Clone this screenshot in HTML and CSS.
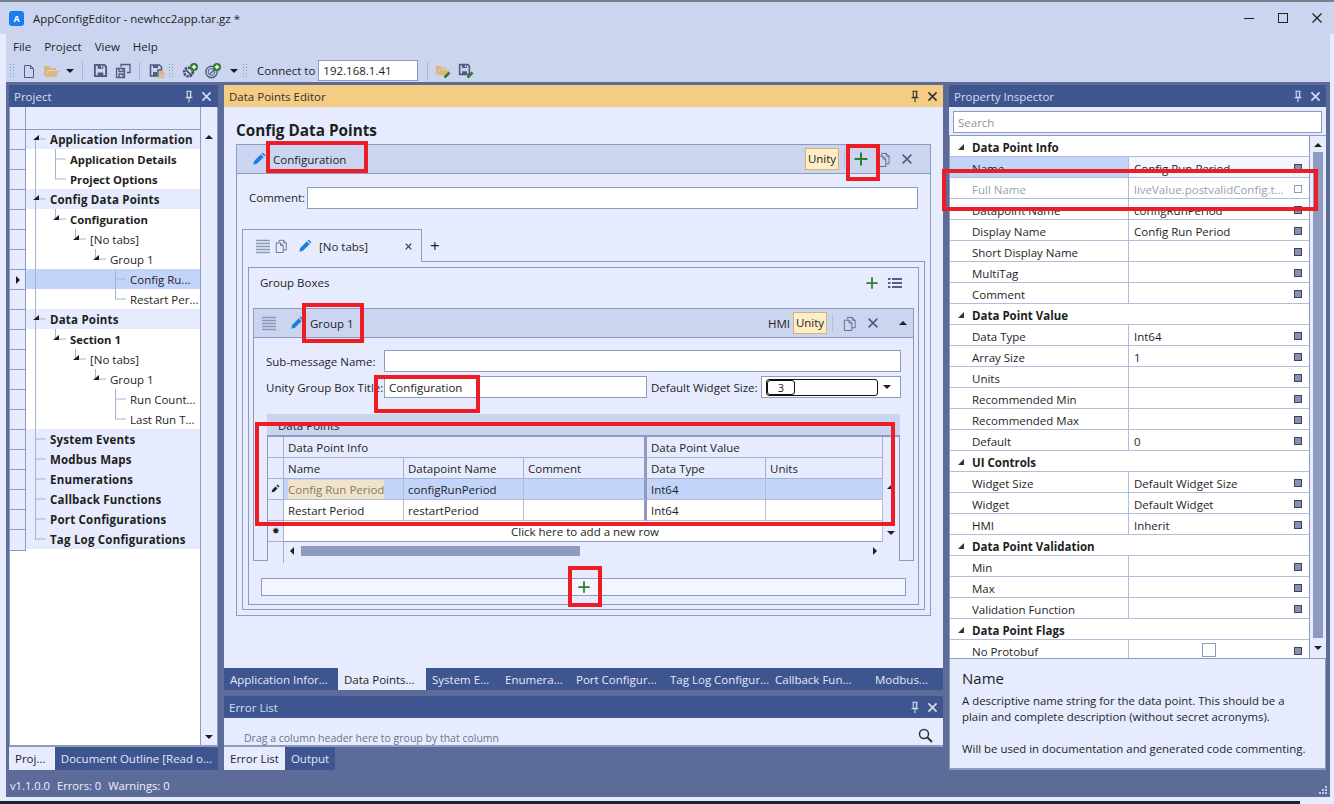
FILE: index.html
```html
<!DOCTYPE html>
<html lang="en">
<head>
  <meta charset="UTF-8">
  <title>AppConfigEditor - newhcc2app.tar.gz *</title>
  <link rel="stylesheet" href="styles.css">
</head>
<body>
  <!-- shared icons -->
  <svg class="icon-defs" width="0" height="0">
    <symbol id="i-pencil" viewBox="0 0 16 16"><path d="M1.5 14.5l1-4.2 7.6-7.6 3.2 3.2-7.6 7.6zM11 1.8l1.2-1.1 3.1 3.1-1.1 1.2z" fill="#1b7fe3"/></symbol>
    <symbol id="i-copy" viewBox="0 0 16 16"><path d="M6 3.5V1.5h5l3 3v8h-3M2.5 4.5h5l3 3v8h-8zM7.5 4.5v3h3M11 1.5v3h3" fill="none" stroke="#5b6788" stroke-width="1"/></symbol>
    <symbol id="i-close" viewBox="0 0 16 16"><path d="M3 3l10 10M13 3L3 13" fill="none" stroke="currentColor" stroke-width="2"/></symbol>
    <symbol id="i-plus" viewBox="0 0 16 16"><path d="M8 1.5v13M1.5 8h13" fill="none" stroke="#2c7d2f" stroke-width="2"/></symbol>
    <symbol id="i-pin" viewBox="0 0 16 16"><path d="M5 2.5h6M6 2.5v7h4v-7M4 10h8M8 10v5" fill="none" stroke="currentColor" stroke-width="1.2"/><path d="M9 3h1v6H9z" fill="currentColor"/></symbol>
    <symbol id="i-lines" viewBox="0 0 16 16"><path d="M1 2.5h14M1 5.5h14M1 8.500h14M1 11.500h14M1 14.500h14" fill="none" stroke="#8d98b8" stroke-width="1.4"/></symbol>
    <symbol id="i-save" viewBox="0 0 16 16"><path d="M2 2h10l2 2v10H2z" fill="none" stroke="#505b7e" stroke-width="2"/><path d="M5 2h6v4H5zM5 10h6v4H5z" fill="#505b7e"/><path d="M8.500 2.500h1.500v2.500H8.500z" fill="#ccd5f0"/></symbol>
    <symbol id="i-folder" viewBox="0 0 16 16"><path d="M1 3h5l1.500 2H13v2H5L2.500 13H1z" fill="#dcb67a"/><path d="M5.500 8H16l-3 6H2.500z" fill="#dcb67a"/></symbol>
  </svg>

  <div class="top-strip"></div>
  <header class="titlebar">
    <span class="app-logo">A</span>
    <span class="app-title">AppConfigEditor - newhcc2app.tar.gz *</span>
    <span class="win-controls">
      <svg width="12" height="12" viewBox="0 0 12 12"><path d="M1 6.500h10" stroke="#222" fill="none"/></svg>
      <svg width="12" height="12" viewBox="0 0 12 12"><rect x="1.500" y="1.500" width="9" height="9" stroke="#222" fill="none"/></svg>
      <svg width="12" height="12" viewBox="0 0 12 12"><path d="M1.500 1.500l9 9M10.500 1.500l-9 9" stroke="#222" stroke-width="1.300" fill="none"/></svg>
    </span>
  </header>

  <div class="shell">
    <nav class="menubar">
      <span>File</span><span>Project</span><span>View</span><span>Help</span>
    </nav>

    <div class="toolbar">
      <span class="grip"></span>
      <button class="tb-btn ml-3"><svg width="16" height="16" viewBox="0 0 16 16"><path d="M3.500 2.500h6l3 3v9h-9zM9.500 2.500v3h3" fill="none" stroke="#505b7e"/></svg></button>
      <button class="tb-btn"><svg width="16" height="16"><use href="#i-folder"/></svg></button>
      <span class="caret-btn"></span>
      <span class="tb-sep"></span>
      <button class="tb-btn ml-3"><svg width="15" height="15"><use href="#i-save"/></svg></button>
      <button class="tb-btn ml-1"><svg width="16" height="16" viewBox="0 0 16 16"><path d="M1.500 5.500h8v9h-8zM4 5.500v3h4v-3M4 14v-3h4v3M6 4V1.500h9v8h-3" fill="none" stroke="#505b7e" stroke-width="1.300"/></svg></button>
      <span class="tb-sep ml-1"></span>
      <button class="tb-btn ml-3"><svg width="16" height="16" viewBox="0 0 16 16"><path d="M1.500 2h9l2 2v3H9v6H1.500z" fill="none" stroke="#505b7e" stroke-width="1.600"/><path d="M4 2h5v3H4zM4 9h4v4H4z" fill="#505b7e"/><ellipse cx="12.500" cy="9.500" rx="3" ry="1.500" fill="#dcb67a"/><path d="M9.500 11h6v1.500h-6zM9.500 13.500h6V15h-6z" fill="#dcb67a"/></svg></button>
      <span class="grip"></span>
      <button class="tb-btn ml-5"><svg width="16" height="16" viewBox="0 0 16 16"><circle cx="6.500" cy="9" r="4.300" fill="none" stroke="#3f4a69" stroke-width="2.600" stroke-dasharray="2.200 1"/><path d="M4 7l6 6" stroke="#3f4a69" stroke-width="1.600"/><circle cx="12" cy="4" r="4" fill="#2c7d2f"/><path d="M12 1.800v4.400M9.800 4h4.400" stroke="#fff" stroke-width="1.300"/></svg></button>
      <button class="tb-btn ml-1"><svg width="16" height="16" viewBox="0 0 16 16"><circle cx="6.500" cy="9" r="5.700" fill="none" stroke="#505b7e" stroke-width="1.400"/><circle cx="6.500" cy="9" r="3.400" fill="none" stroke="#505b7e"/><path d="M5 11l4-4" stroke="#505b7e" stroke-width="1.400"/><circle cx="12" cy="4" r="4" fill="#2c7d2f"/><path d="M12 1.800v4.400M9.800 4h4.400" stroke="#fff" stroke-width="1.300"/></svg></button>
      <span class="caret-btn ml-2"></span>
      <span class="grip"></span>
      <span class="connect-label">Connect to</span>
      <input class="connect-input" type="text" value="192.168.1.41">
      <span class="tb-sep ml-5"></span>
      <button class="tb-btn ml-1"><svg width="16" height="16" viewBox="0 0 16 16"><use href="#i-folder" width="14" height="14"/><path d="M9.500 14.500l5-5" stroke="#2c7d2f" stroke-width="2.600"/></svg></button>
      <button class="tb-btn ml-1"><svg width="16" height="16" viewBox="0 0 16 16"><use href="#i-save" width="13" height="13"/><path d="M9.500 14.500l5-5" stroke="#2c7d2f" stroke-width="2.600"/></svg></button>
    </div>

    <main class="workspace">
      <!-- left column -->
      <section class="panel project-panel">
        <div class="panel-head dark">
          <span>Project</span>
          <svg class="pin" width="14" height="14"><use href="#i-pin"/></svg>
          <svg class="head-x" width="13" height="13"><use href="#i-close"/></svg>
        </div>
        <div class="tree-box">
          <div class="row-heads">
            <span></span><span></span><span></span><span></span><span></span><span></span><span></span>
            <span class="cur"></span>
            <span></span><span></span><span></span><span></span><span></span><span></span>
            <span></span><span></span><span></span><span></span><span></span><span></span><span></span>
          </div>
          <div class="tree">
            <svg class="tree-lines" width="175" height="420" viewBox="26 128 175 420">
              <g fill="none" stroke="#a9b3d3">
                <path d="M35.500 139v401M35 139h11M35 199h11M35 319h11M35 439h11M35 459h11M35 479h11M35 499h11M35 519h11M35 539h11"/>
                <path d="M55.500 149v30M55 159h11M55 179h11"/>
                <path d="M55.500 209v10M55 219h11M75.500 229v10M75 239h11M95.500 249v10M95 259h11M115.500 269v30M115 279h11M115 299h11"/>
                <path d="M55.500 329v10M55 339h11M75.500 349v10M75 359h11M95.500 369v10M95 379h11M115.500 389v30M115 399h11M115 419h11"/>
              </g>
              <g fill="#1e1e1e">
                <path d="M33 140h6v-5zM33 200h6v-5zM33 320h6v-5z"/>
                <path d="M53 220h6v-5zM73 240h6v-5zM93 260h6v-5z"/>
                <path d="M53 340h6v-5zM73 360h6v-5zM93 380h6v-5z"/>
              </g>
            </svg>
            <div class="tree-row root lvl0">Application Information</div>
            <div class="tree-row lvl1 strong">Application Details</div>
            <div class="tree-row lvl1 strong">Project Options</div>
            <div class="tree-row root lvl0">Config Data Points</div>
            <div class="tree-row lvl1 strong">Configuration</div>
            <div class="tree-row lvl2">[No tabs]</div>
            <div class="tree-row lvl3">Group 1</div>
            <div class="tree-row lvl4 selected">Config Ru...</div>
            <div class="tree-row lvl4">Restart Per...</div>
            <div class="tree-row root lvl0">Data Points</div>
            <div class="tree-row lvl1 strong">Section 1</div>
            <div class="tree-row lvl2">[No tabs]</div>
            <div class="tree-row lvl3">Group 1</div>
            <div class="tree-row lvl4">Run Count...</div>
            <div class="tree-row lvl4">Last Run T...</div>
            <div class="tree-row root lvl0">System Events</div>
            <div class="tree-row root lvl0">Modbus Maps</div>
            <div class="tree-row root lvl0">Enumerations</div>
            <div class="tree-row root lvl0">Callback Functions</div>
            <div class="tree-row root lvl0">Port Configurations</div>
            <div class="tree-row root lvl0">Tag Log Configurations</div>
          </div>
          <div class="tree-scroll"><span class="arrow up"></span><span class="arrow down"></span></div>
        </div>
        <div class="bottom-tabs">
          <span class="btab active proj-tab">Proj...</span>
          <span class="btab outline-tab">Document Outline [Read o...</span>
        </div>
      </section>

      <!-- center column -->
      <div class="center">
        <section class="panel editor-panel">
          <div class="panel-head gold">
            <span>Data Points Editor</span>
            <svg class="pin" width="14" height="14"><use href="#i-pin"/></svg>
            <svg class="head-x" width="13" height="13"><use href="#i-close"/></svg>
          </div>
          <div class="editor-body">
            <h2 class="editor-title">Config Data Points</h2>
            <div class="card">
              <div class="card-head">
                <svg class="pencil-a" width="14" height="14"><use href="#i-pencil"/></svg>
                <span class="card-name">Configuration</span>
                <span class="badge push">Unity</span>
                <span class="v-sep"></span>
                <svg class="tool-plus" width="16" height="16"><use href="#i-plus"/></svg>
                <svg class="tool-copy" width="15" height="15"><use href="#i-copy"/></svg>
                <svg class="tool-x" width="14" height="14"><use href="#i-close"/></svg>
              </div>
              <div class="comment-row">
                <label>Comment:</label>
                <input type="text">
              </div>
              <div class="tab-strip">
                <div class="tab">
                  <svg width="16" height="16"><use href="#i-lines"/></svg>
                  <svg class="tab-copy" width="14" height="14"><use href="#i-copy"/></svg>
                  <svg class="tab-pencil" width="14" height="14"><use href="#i-pencil"/></svg>
                  <span class="tab-name">[No tabs]</span>
                  <svg class="tab-x" width="9" height="9"><use href="#i-close"/></svg>
                </div>
                <span class="tab-add">+</span>
              </div>
              <div class="tab-body">
                <div class="inner-box">
                  <div class="boxes-row">
                    <span>Group Boxes</span>
                    <svg class="boxes-plus" width="14" height="14"><use href="#i-plus"/></svg>
                    <svg class="boxes-list" width="14" height="14" viewBox="0 0 14 14"><path d="M0 2h2.500v2H0zM0 6h2.500v2H0zM0 10h2.500v2H0zM4 2h10v2H4zM4 6h10v2H4zM4 10h10v2H4z" fill="#535f82"/></svg>
                  </div>
                  <div class="group">
                    <div class="group-head">
                      <svg class="group-lines" width="16" height="16"><use href="#i-lines"/></svg>
                      <svg class="group-pencil" width="14" height="14"><use href="#i-pencil"/></svg>
                      <span>Group 1</span>
                      <span class="hmi push">HMI</span>
                      <span class="badge">Unity</span>
                      <span class="v-sep"></span>
                      <svg class="tool-copy group-copy" width="15" height="15"><use href="#i-copy"/></svg>
                      <svg class="tool-x" width="14" height="14"><use href="#i-close"/></svg>
                      <span class="arrow up group-arrow"></span>
                    </div>
                    <div class="group-body">
                      <div class="field">
                        <label class="field-label">Sub-message Name:</label>
                        <input class="grow" type="text">
                      </div>
                      <div class="field second">
                        <label class="field-label">Unity Group Box Title:</label>
                        <input class="title-input" type="text" value="Configuration">
                        <label class="size-label">Default Widget Size:</label>
                        <div class="combo">
                          <div class="combo-value"><span class="combo-chip">3</span></div>
                          <span class="arrow down"></span>
                        </div>
                      </div>
                      <div class="dp-block">
                        <div class="dp-title">Data Points</div>
                        <div class="dp-grid">
                          <div class="c head"></div>
                          <div class="c head span3 thick tall">Data Point Info</div>
                          <div class="c head span2 tall">Data Point Value</div>
                          <div class="c bar"></div>

                          <div class="c head"></div>
                          <div class="c head tall">Name</div>
                          <div class="c head tall">Datapoint Name</div>
                          <div class="c head thick tall">Comment</div>
                          <div class="c head tall">Data Type</div>
                          <div class="c head tall">Units</div>
                          <div class="c bar"></div>

                          <div class="c head rowmark"><svg width="9" height="9" viewBox="0 0 9 9"><path d="M.5 8.500l1-3 3-3 2 2-3 3zM5.500 1.500l1-1 2 2-1 1z" fill="#1e1e1e"/></svg></div>
                          <div class="c sel"><span class="editing">Config Run Period</span></div>
                          <div class="c sel">configRunPeriod</div>
                          <div class="c sel thick"></div>
                          <div class="c sel">Int64</div>
                          <div class="c sel"></div>
                          <div class="c bar"><span class="arrow up"></span></div>

                          <div class="c head"></div>
                          <div class="c">Restart Period</div>
                          <div class="c">restartPeriod</div>
                          <div class="c thick"></div>
                          <div class="c">Int64</div>
                          <div class="c"></div>
                          <div class="c bar"></div>

                          <div class="c head rowmark star">&#10040;</div>
                          <div class="c span5 newrow">Click here to add a new row</div>
                          <div class="c bar low"><span class="arrow down"></span></div>

                          <div class="c head scrollcell"></div>
                          <div class="c span5 hscroll">
                            <span class="arrow left"></span>
                            <span class="hthumb"></span>
                            <span class="arrow right"></span>
                          </div>
                          <div class="c bar scrollcell"></div>
                        </div>
                      </div>
                    </div>
                  </div>
                  <div class="add-bar"><svg width="14" height="14"><use href="#i-plus"/></svg></div>
                </div>
              </div>
            </div>
          </div>
          <div class="doc-tabs">
            <span class="doc-tab w-114">Application Infor...</span>
            <span class="doc-tab active w-88">Data Points...</span>
            <span class="doc-tab w-73">System E...</span>
            <span class="doc-tab w-71">Enumera...</span>
            <span class="doc-tab w-94">Port Configur...</span>
            <span class="doc-tab w-105">Tag Log Configur...</span>
            <span class="doc-tab w-100">Callback Fun...</span>
            <span class="doc-tab">Modbus...</span>
          </div>
        </section>

        <section class="panel error-panel">
          <div class="panel-head dark">
            <span>Error List</span>
            <svg class="pin" width="14" height="14"><use href="#i-pin"/></svg>
            <svg class="head-x" width="13" height="13"><use href="#i-close"/></svg>
          </div>
          <div class="error-body">
            <span class="drag-hint">Drag a column header here to group by that column</span>
            <svg class="search-ico" width="15" height="15" viewBox="0 0 15 15"><circle cx="6" cy="6" r="4.500" fill="none" stroke="#333" stroke-width="1.500"/><path d="M9.500 9.500L14 14" stroke="#333" stroke-width="2"/></svg>
          </div>
          <div class="bottom-tabs">
            <span class="btab active">Error List</span>
            <span class="btab">Output</span>
          </div>
        </section>
      </div>

      <!-- right column -->
      <section class="panel inspector-panel">
        <div class="panel-head dark">
          <span>Property Inspector</span>
          <svg class="pin" width="14" height="14"><use href="#i-pin"/></svg>
          <svg class="head-x" width="13" height="13"><use href="#i-close"/></svg>
        </div>
        <div class="search-row"><input type="text" placeholder="Search"></div>
        <div class="props-wrap">
          <div class="props">
            <div class="p-group">Data Point Info</div>
            <div class="p-row current"><span class="p-name">Name</span><span class="p-val">Config Run Period</span><i class="mark"></i></div>
            <div class="p-row muted"><span class="p-name">Full Name</span><span class="p-val">liveValue.postvalidConfig.t...</span><i class="mark"></i></div>
            <div class="p-row"><span class="p-name">Datapoint Name</span><span class="p-val">configRunPeriod</span><i class="mark"></i></div>
            <div class="p-row"><span class="p-name">Display Name</span><span class="p-val">Config Run Period</span><i class="mark"></i></div>
            <div class="p-row"><span class="p-name">Short Display Name</span><span class="p-val"></span><i class="mark"></i></div>
            <div class="p-row"><span class="p-name">MultiTag</span><span class="p-val"></span><i class="mark"></i></div>
            <div class="p-row"><span class="p-name">Comment</span><span class="p-val"></span><i class="mark"></i></div>
            <div class="p-group">Data Point Value</div>
            <div class="p-row"><span class="p-name">Data Type</span><span class="p-val">Int64</span><i class="mark"></i></div>
            <div class="p-row"><span class="p-name">Array Size</span><span class="p-val">1</span><i class="mark"></i></div>
            <div class="p-row"><span class="p-name">Units</span><span class="p-val"></span><i class="mark"></i></div>
            <div class="p-row"><span class="p-name">Recommended Min</span><span class="p-val"></span><i class="mark"></i></div>
            <div class="p-row"><span class="p-name">Recommended Max</span><span class="p-val"></span><i class="mark"></i></div>
            <div class="p-row"><span class="p-name">Default</span><span class="p-val">0</span><i class="mark"></i></div>
            <div class="p-group">UI Controls</div>
            <div class="p-row"><span class="p-name">Widget Size</span><span class="p-val">Default Widget Size</span><i class="mark"></i></div>
            <div class="p-row"><span class="p-name">Widget</span><span class="p-val">Default Widget</span><i class="mark"></i></div>
            <div class="p-row"><span class="p-name">HMI</span><span class="p-val">Inherit</span><i class="mark"></i></div>
            <div class="p-group">Data Point Validation</div>
            <div class="p-row"><span class="p-name">Min</span><span class="p-val"></span><i class="mark"></i></div>
            <div class="p-row"><span class="p-name">Max</span><span class="p-val"></span><i class="mark"></i></div>
            <div class="p-row"><span class="p-name">Validation Function</span><span class="p-val"></span><i class="mark"></i></div>
            <div class="p-group">Data Point Flags</div>
            <div class="p-row"><span class="p-name">No Protobuf</span><span class="p-val"><b class="check"></b></span><i class="mark"></i></div>
          </div>
          <div class="props-scroll">
            <span class="arrow up"></span>
            <span class="v-thumb"></span>
            <span class="arrow down"></span>
          </div>
        </div>
        <div class="description">
          <h3>Name</h3>
          <p>A descriptive name string for the data point. This should be a plain and complete description (without secret acronyms).</p>
          <p class="gap">Will be used in documentation and generated code commenting.</p>
        </div>
      </section>
    </main>

    <footer class="statusbar">
      <span>v1.1.0.0</span><span>Errors: 0</span><span>Warnings: 0</span>
      <svg class="resize-grip" width="8" height="8" viewBox="0 0 8 8"><path d="M6 0h2v2H6zM3 3h2v2H3zM6 3h2v2H6zM0 6h2v2H0zM3 6h2v2H3zM6 6h2v2H6z" fill="#c3cbe4"/></svg>
    </footer>
  </div>
  <div class="desktop-strip"></div>

  <!-- red review marks drawn over the screenshot -->
  <div class="mark-box m-config"></div>
  <div class="mark-box m-plus"></div>
  <div class="mark-box m-fullname"></div>
  <div class="mark-box m-group"></div>
  <div class="mark-box m-title"></div>
  <div class="mark-box m-grid"></div>
  <div class="mark-box m-add"></div>
</body>
</html>
```

FILE: styles.css
```css
* {
  box-sizing: border-box;
}

html, body {
  margin: 0;
  height: 804px;
  overflow: hidden;
}

body {
  position: relative;
  width: 1334px;
  background: #e6ecfd;
  font-family: "Open Sans", "Noto Sans", sans-serif;
  font-size: 11.5px;
  color: #1e1e1e;
  display: flex;
  flex-direction: column;
}

input, button {
  font: inherit;
  color: inherit;
}

input {
  border: 1px solid #8e9bc0;
  background: #fff;
  padding: 0 4px;
  outline: none;
  height: 22px;
}

.icon-defs {
  position: absolute;
}

svg {
  display: block;
  flex: none;
}

/* arrows */
.arrow {
  display: block;
  width: 0;
  height: 0;
  border: 4px solid transparent;
}
.arrow.up {
  border-top: 0;
  border-bottom-color: #1e1e1e;
}
.arrow.down {
  border-bottom: 0;
  border-top-color: #1e1e1e;
}
.arrow.left {
  border-left: 0;
  border-right-color: #1e1e1e;
}
.arrow.right {
  border-right: 0;
  border-left-color: #1e1e1e;
}

/* window chrome */
.top-strip {
  height: 2px;
  background: #7b7f8c;
}

.titlebar {
  height: 32px;
  background: #ccd5f0;
  display: flex;
  align-items: center;
  padding: 0 0 0 9px;
  font-size: 12px;
}

.app-logo {
  width: 15px;
  height: 15px;
  border-radius: 3px;
  background: #1a7cf0;
  color: #fff;
  font-size: 9px;
  font-weight: 700;
  text-align: center;
  line-height: 15px;
}

.app-title {
  margin-left: 9px;
  font-size: 11.5px;
}

.win-controls {
  margin-left: auto;
  display: flex;
  gap: 22px;
  margin-right: 11px;
}

.shell {
  flex: 1;
  margin: 0 4px 0 6px;
  display: flex;
  flex-direction: column;
  min-height: 0;
}

.menubar {
  height: 25px;
  background: #ccd5f0;
  display: flex;
  gap: 13px;
  align-items: center;
  padding: 0 0 1px 7px;
  margin-right: 0;
}

.toolbar {
  height: 23px;
  background: #ccd5f0;
  display: flex;
  align-items: center;
  padding-left: 3px;
  margin-right: 0;
}

.grip {
  width: 6px;
  height: 15px;
  background-image: radial-gradient(circle, #8e9bc0 1px, transparent 1px);
  background-size: 3px 3px;
}

.tb-btn {
  width: 22px;
  height: 20px;
  border: 0;
  padding: 0;
  background: none;
  display: flex;
  align-items: center;
  justify-content: center;
}

.caret-btn {
  width: 16px;
  display: flex;
  justify-content: center;
}
.caret-btn::after {
  content: "";
  border: 4px solid transparent;
  border-bottom: 0;
  border-top-color: #1e1e1e;
}

.tb-sep {
  width: 8px;
  height: 18px;
  background: linear-gradient(#aab5d6, #aab5d6) center / 1px 100% no-repeat;
}

.ml-1 { margin-left: 1px; }
.ml-2 { margin-left: 2px; }
.ml-3 { margin-left: 3px; }
.ml-5 { margin-left: 5px; }

.connect-label {
  margin-left: 9px;
}

.connect-input {
  margin-left: 3px;
  width: 100px;
  height: 21px;
}

/* main dock area */
.workspace {
  height: 688px;
  background: #5d6b99;
  display: grid;
  grid-template-columns: 209px 719px 377px;
  column-gap: 6px;
  padding: 3px 0 0 3px;
}

.panel {
  display: flex;
  flex-direction: column;
  min-height: 0;
  min-width: 0;
}

.panel-head {
  height: 22px;
  flex: none;
  display: flex;
  align-items: center;
  padding: 0 4px 0 5px;
}
.panel-head.dark {
  background: #3f558f;
  color: #d5ddf3;
}
.panel-head.gold {
  background: #f4cc84;
  color: #333;
}
.pin {
  margin-left: auto;
}
.head-x {
  margin-left: 4px;
}

/* project tree */
.project-panel .panel-head {
  padding-right: 5px;
}

.tree-box {
  flex: 1;
  display: flex;
  background: #fff;
  border: 1px solid #8e9bc0;
  border-bottom-width: 2px;
  border-top: 0;
  min-height: 0;
}

.row-heads {
  width: 16px;
  flex: none;
  border-right: 1px solid #8e9bc0;
  display: flex;
  flex-direction: column;
  align-self: flex-start;
  background: #e6ecfd;
  border-bottom: 1px solid #8e9bc0;
  position: relative;
}
.row-heads::before {
  content: "";
  height: 22px;
  border-bottom: 1px solid #8e9bc0;
}
.row-heads span {
  height: 20px;
  border-bottom: 1px solid #8e9bc0;
  position: relative;
}
.row-heads span:last-child {
  border-bottom: 0;
}
.row-heads .cur::after {
  content: "";
  position: absolute;
  left: 6px;
  top: 6px;
  border: 4px solid transparent;
  border-right: 0;
  border-left-color: #1e1e1e;
}

.tree {
  flex: 1;
  position: relative;
  padding-top: 22px;
  min-width: 0;
}
.tree::before {
  content: "";
  position: absolute;
  left: 0;
  right: 0;
  top: 0;
  height: 22px;
  background: #e6ecfd;
  border-bottom: 1px solid #8e9bc0;
}
.tree-lines {
  position: absolute;
  left: 0;
  top: 21px;
  pointer-events: none;
}
.tree-row {
  height: 20px;
  line-height: 21px;
  white-space: nowrap;
  overflow: hidden;
}
.tree-row.root {
  background: #e6ecfd;
  font-weight: 700;
  letter-spacing: .2px;
}
.tree-row.strong {
  font-weight: 700;
  font-size: 11.3px;
}
.tree-row.selected {
  background: #c3d4fb;
}
.lvl0 { padding-left: 24px; }
.lvl1 { padding-left: 44px; }
.lvl2 { padding-left: 64px; }
.lvl3 { padding-left: 84px; }
.lvl4 { padding-left: 104px; }

.tree-scroll {
  width: 17px;
  flex: none;
  background: #e6ecfd;
  border-left: 1px solid #8e9bc0;
  display: flex;
  flex-direction: column;
  align-items: center;
  justify-content: space-between;
  padding: 28px 0 6px;
}

.bottom-tabs {
  height: 23px;
  flex: none;
  display: flex;
  background: #5d6b99;
}
.btab {
  background: #3f558f;
  color: #e3e8f8;
  padding: 0 6px;
  line-height: 23px;
  white-space: nowrap;
}
.btab.active {
  background: #e6ecfd;
  color: #1e1e1e;
}
.proj-tab {
  width: 47px;
  padding-left: 6px;
}
.outline-tab {
  flex: 1;
}

/* center column */
.center {
  display: flex;
  flex-direction: column;
  row-gap: 6px;
  min-width: 0;
}

.editor-panel {
  height: 605px;
}

.editor-body {
  flex: 1;
  background: #e6ecfd;
  padding: 11px 12px 0;
  min-height: 0;
}

.editor-title {
  margin: 0 0 2px;
  font-size: 15.3px;
  line-height: 24px;
  font-weight: 700;
}

.card {
  border: 1px solid #8e9bc0;
  height: 472px;
  display: flex;
  flex-direction: column;
}

.card-head, .group-head {
  height: 29px;
  flex: none;
  background: #ccd5f0;
  border-bottom: 1px solid #8e9bc0;
  display: flex;
  align-items: center;
}
.card-head {
  padding: 0 16px 0 15px;
}
.card-name {
  margin-left: 7px;
}

.push {
  margin-left: auto;
}

.badge {
  background: #fdeec9;
  border: 1px solid #d9b36c;
  height: 22px;
  width: 34px;
  text-align: center;
  line-height: 20px;
}

.v-sep {
  width: 1px;
  height: 18px;
  background: #b4bfdc;
  margin-left: 5px;
}

.tool-plus {
  margin-left: 8px;
}
.tool-copy {
  margin-left: 7px;
}
.tool-x {
  margin-left: 9px;
  color: #555f80;
}

.comment-row {
  display: flex;
  align-items: center;
  margin-top: 13px;
  padding: 0 12px;
}
.comment-row label {
  width: 58px;
  margin-top: -1px;
}
.comment-row input {
  flex: 1;
}

.tab-strip {
  display: flex;
  align-items: center;
  margin: 20px 0 -1px 5px;
  height: 33px;
  position: relative;
}
.tab {
  width: 180px;
  height: 33px;
  border: 1px solid #8e9bc0;
  border-bottom: 0;
  background: #e6ecfd;
  display: flex;
  align-items: center;
  padding-left: 12px;
  position: relative;
  z-index: 1;
}
.tab-copy {
  margin-left: 3px;
}
.tab-pencil {
  margin-left: 10px;
}
.tab-name {
  margin-left: 7px;
}
.tab-x {
  margin-left: 36px;
  color: #333;
}
.tab-add {
  margin-left: 8px;
  font-size: 17px;
  line-height: 17px;
}

.tab-body {
  margin: 0 5px 5px;
  flex: 1;
  border: 1px solid #8e9bc0;
  padding: 5px;
  min-height: 0;
}

.inner-box {
  border: 1px solid #8e9bc0;
  height: 338px;
  padding: 0 4px;
}

.boxes-row {
  height: 40px;
  display: flex;
  align-items: center;
  padding: 0 12px 11px 7px;
}
.boxes-plus {
  margin-left: auto;
}
.boxes-list {
  margin-left: 9px;
}

.group {
  border: 1px solid #8e9bc0;
  height: 253px;
  display: flex;
  flex-direction: column;
}
.group-head {
  padding: 0 5px 0 7px;
}
.group-pencil {
  margin-left: 13px;
}
.group-head > span:nth-of-type(1) {
  margin-left: 6px;
}
.hmi {
  margin-right: 3px;
}
.group-copy {
  margin-left: 9px;
}
.group-head .tool-x {
  margin-left: 9px;
}
.group-arrow {
  margin: 0 1px 0 19px;
}

.group-body {
  padding: 12px 12px 0 12px;
  flex: 1;
  display: flex;
  flex-direction: column;
  min-height: 0;
}

.field {
  display: flex;
  align-items: center;
  flex: none;
}
.field.second {
  margin-top: 4px;
}
.field-label {
  width: 118px;
  flex: none;
  white-space: nowrap;
}
.grow {
  flex: 1;
}
.title-input {
  width: 263px;
}
.size-label {
  margin-left: 4px;
  width: 110px;
  white-space: nowrap;
}
.combo {
  flex: 1;
  height: 22px;
  border: 1px solid #8e9bc0;
  background: #fff;
  display: flex;
  align-items: center;
  padding: 0 9px 0 4px;
  justify-content: space-between;
}
.combo-value {
  width: 112px;
  height: 17px;
  border: 1px solid #111;
  border-radius: 3px;
}
.combo-chip {
  display: block;
  width: 28px;
  height: 15px;
  border: 1px solid #111;
  border-radius: 3px;
  text-align: center;
  line-height: 13px;
  font-size: 11px;
}

.dp-block {
  margin: 16px 0 0 1px;
  flex: none;
  border: 1px solid #8e9bc0;
  border-top: 0;
  border-bottom: 2px solid #8e9bc0;
  height: 147px;
  width: 633px;
  background: #e6ecfd;
}
.dp-title {
  background: #ccd5f0;
  line-height: 23px;
  padding-left: 11px;
  border-bottom: 2px solid #8e9bc0;
  margin: 0 -1px;
  height: 23px;
}
.dp-grid {
  display: grid;
  grid-template-columns: 16px 120px 120px 123px 119px 117px 16px;
  grid-auto-rows: 21px;
}
.c {
  border-right: 1px solid #b3bdda;
  border-bottom: 1px solid #b3bdda;
  background: #fff;
  padding-left: 4px;
  line-height: 22px;
  white-space: nowrap;
  overflow: hidden;
}
.c.head {
  background: #e6ecfd;
  border-color: #a5b1d1;
}
.c.sel {
  background: #c3d4fb;
}
.c.thick {
  border-right: 3px solid #8e9bc0;
}
.c.bar {
  background: #e6ecfd;
  border: 0;
  padding: 6px 0 0 4px;
}
.c.bar.low {
  padding-top: 10px;
}
.span2 { grid-column: span 2; }
.span3 { grid-column: span 3; }
.span5 { grid-column: span 5; }
.rowmark {
  padding: 5px 0 0 3px;
  line-height: 9px;
}
.c.star {
  font-size: 9px;
  line-height: 9px;
  padding-left: 4px;
}
.editing {
  background: #f0e3cd;
  color: #8a7a5e;
  display: inline-block;
  line-height: 19px;
  margin-top: 1px;
  vertical-align: top;
}
.newrow {
  text-align: center;
  border-bottom: 1px solid #8e9bc0;
}
.hscroll {
  background: #e6ecfd;
  border: 0;
  display: flex;
  align-items: center;
  padding: 0 6px 3px;
}
.hthumb {
  width: 279px;
  height: 10px;
  background: #8e9bc0;
  margin-left: 7px;
}
.hscroll .right {
  margin-left: auto;
}
.dp-grid .scrollcell {
  border-bottom: 0;
}

.add-bar {
  margin: 17px 8px 0;
  height: 18px;
  background: #f3f6fe;
  border: 1px solid #8e9bc0;
  display: flex;
  align-items: center;
  justify-content: center;
}

.doc-tabs {
  height: 22px;
  flex: none;
  background: #3f558f;
  display: flex;
  color: #e3e8f8;
  line-height: 23px;
  white-space: nowrap;
}
.doc-tab {
  padding-left: 6px;
}
.doc-tab.active {
  background: #e6ecfd;
  color: #1e1e1e;
}
.w-114 { width: 114px; }
.w-88 { width: 88px; }
.w-73 { width: 73px; }
.w-71 { width: 71px; }
.w-94 { width: 94px; }
.w-105 { width: 105px; }
.w-100 { width: 100px; }

.error-panel {
  flex: 1;
}
.error-body {
  flex: 1;
  background: #e6ecfd;
  border-bottom: 2px solid #8e9bc0;
  display: flex;
  align-items: flex-end;
  padding: 0 10px 0 20px;
  overflow: hidden;
  color: #6f7486;
}
.drag-hint {
  font-size: 10.5px;
  line-height: 16px;
  margin-bottom: -1px;
}
.search-ico {
  margin: 0 0 2px auto;
}

/* property inspector */
.inspector-panel {
  height: 685px;
}
.search-row {
  height: 29px;
  flex: none;
  background: #e6ecfd;
  padding: 4px 4px 0;
  border-bottom: 1px solid #8e9bc0;
}
.search-row input {
  width: 100%;
  height: 22px;
}
.search-row input::placeholder {
  color: #8f94a3;
  opacity: 1;
}

.props-wrap {
  height: 522px;
  flex: none;
  display: flex;
  background: #fff;
  overflow: hidden;
}
.props {
  flex: 1;
  min-width: 0;
  overflow: hidden;
  border-left: 1px solid #8e9bc0;
}
.p-group {
  height: 21px;
  font-weight: 700;
  line-height: 23px;
  padding-left: 22px;
  border-bottom: 1px solid #b3bdda;
  position: relative;
  overflow: hidden;
}
.p-group::before {
  content: "";
  position: absolute;
  left: 8px;
  top: 8px;
  border-style: solid;
  border-width: 0 0 6px 6px;
  border-color: transparent transparent #333 transparent;
}
.p-row {
  height: 21px;
  line-height: 24px;
  display: flex;
  border-bottom: 1px solid #b3bdda;
  position: relative;
  overflow: hidden;
}
.p-name {
  width: 179px;
  flex: none;
  padding-left: 22px;
  border-right: 1px solid #b3bdda;
}
.p-val {
  flex: 1;
  padding-left: 5px;
  position: relative;
}
.mark {
  position: absolute;
  right: 7px;
  top: 7px;
  width: 8px;
  height: 8px;
  background: #8492b8;
  border: 1px solid #3c4258;
}
.p-row.current {
  background: #f3f6fe;
}
.p-row.current .p-name {
  background: #c3d4fb;
}
.p-row.muted {
  color: #9b9fab;
}
.p-row.muted .mark {
  background: #fff;
  border-color: #8e9bc0;
}
.check {
  position: absolute;
  left: 73px;
  top: 3px;
  width: 14px;
  height: 14px;
  background: #fff;
  border: 1px solid #8e9bc0;
}
.props-scroll {
  width: 17px;
  flex: none;
  background: #e6ecfd;
  border-left: 1px solid #8e9bc0;
  display: flex;
  flex-direction: column;
  align-items: center;
  padding: 7px 0 8px;
}
.v-thumb {
  width: 10px;
  height: 486px;
  margin: 5px 0 auto;
  background: #8e9bc0;
}

.description {
  flex: 1;
  background: #e6ecfd;
  border: 1px solid #8e9bc0;
  border-bottom-width: 2px;
  padding: 9px 12px 0;
  min-height: 0;
  font-size: 11.4px;
}
.description h3 {
  margin: 0 0 5px;
  font-size: 15px;
  font-weight: 400;
  line-height: 20px;
}
.description p {
  margin: 0;
  line-height: 16px;
}
.description p.gap {
  margin-top: 16px;
  white-space: nowrap;
}

.statusbar {
  height: 27px;
  background: #5d6b99;
  color: #eef1fb;
  display: flex;
  align-items: center;
  gap: 7px;
  padding: 3px 0 0 4px;
  margin-right: 0;
  font-size: 11.2px;
}
.resize-grip {
  margin-left: auto;
  margin-right: 3px;
  align-self: flex-end;
  margin-bottom: 3px;
}

.desktop-strip {
  height: 3px;
  width: 1300px;
  background: #1b2530;
  margin-top: 4px;
  flex: none;
}

/* red annotation boxes */
.mark-box {
  position: absolute;
  border: 4px solid #ee1c25;
  pointer-events: none;
}
.m-config { left: 266px; top: 141px; width: 102px; height: 32px; }
.m-plus { left: 846px; top: 144px; width: 34px; height: 37px; }
.m-fullname { left: 942px; top: 169px; width: 376px; height: 42px; }
.m-group { left: 302px; top: 303px; width: 62px; height: 40px; }
.m-title { left: 374px; top: 375px; width: 106px; height: 38px; }
.m-grid { left: 255px; top: 422px; width: 640px; height: 104px; }
.m-add { left: 568px; top: 566px; width: 34px; height: 41px; }
```
